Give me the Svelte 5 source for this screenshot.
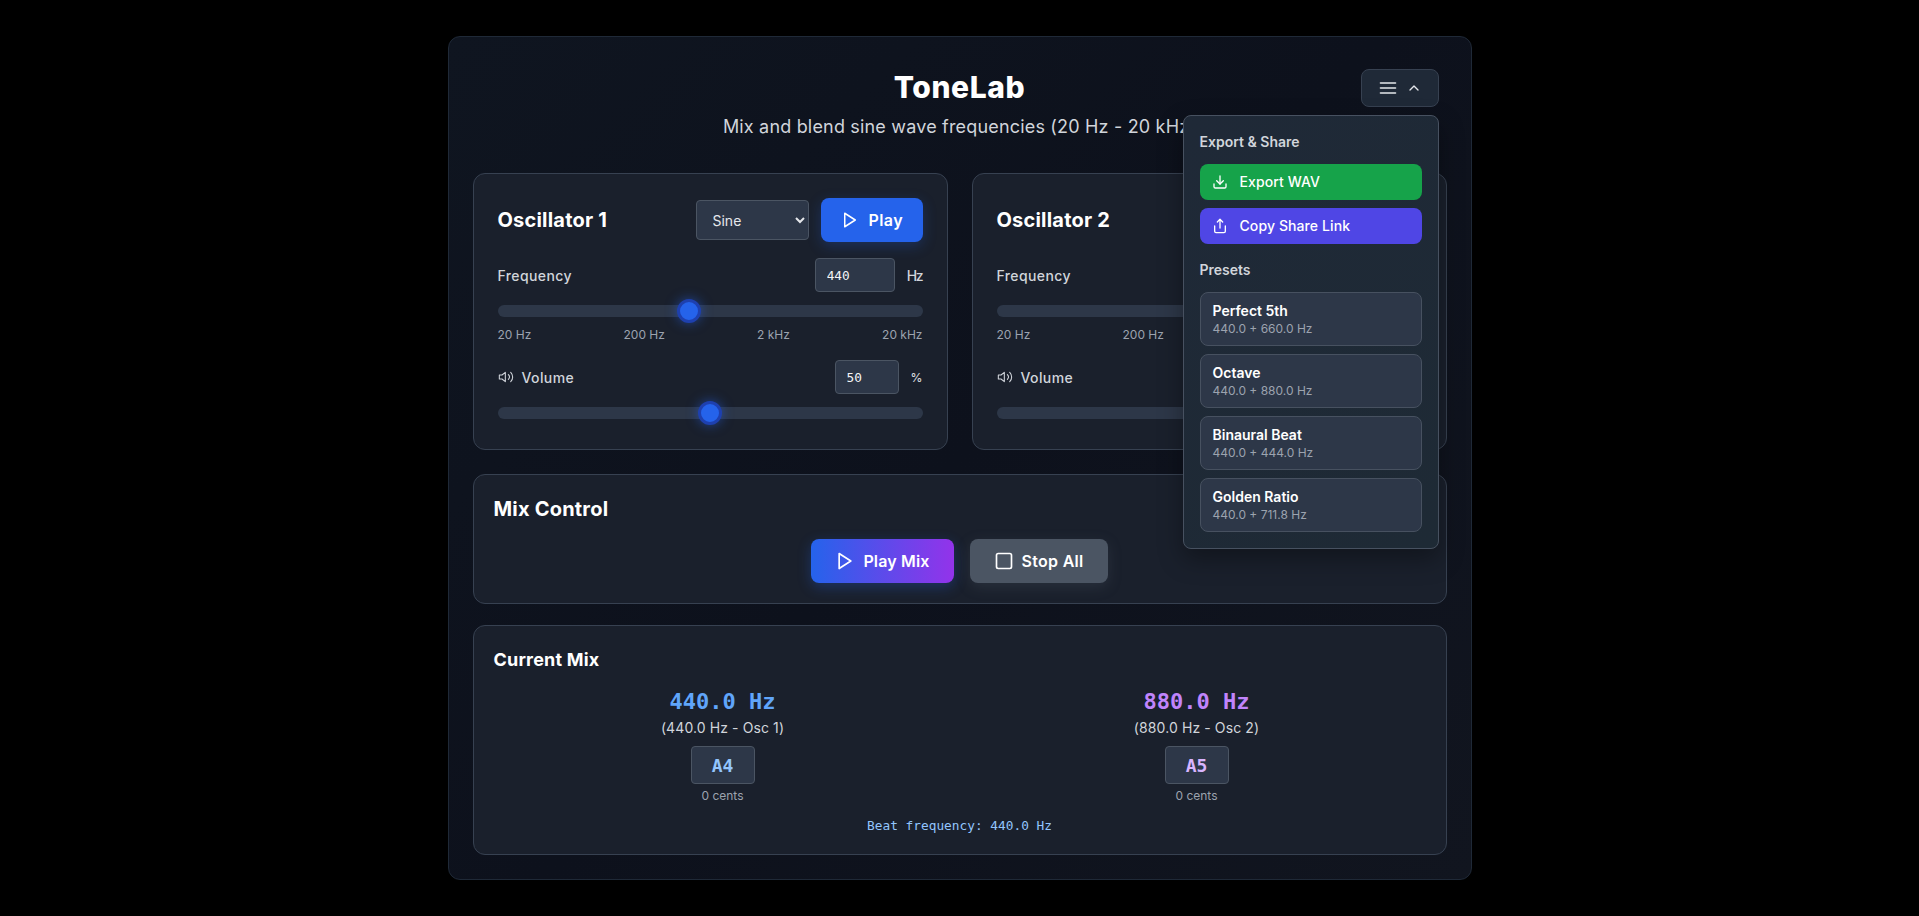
<script lang="ts">
  let oscillators = $state([
    { name: 'Oscillator 1', type: 'Sine', freq: 440, pos: 44.75, volume: 50 },
    { name: 'Oscillator 2', type: 'Sine', freq: 880, pos: 54.8, volume: 50 }
  ]);

  const scaleLabels = ['20 Hz', '200 Hz', '2 kHz', '20 kHz'];

  const presets = [
    { name: 'Perfect 5th', detail: '440.0 + 660.0 Hz' },
    { name: 'Octave', detail: '440.0 + 880.0 Hz' },
    { name: 'Binaural Beat', detail: '440.0 + 444.0 Hz' },
    { name: 'Golden Ratio', detail: '440.0 + 711.8 Hz' }
  ];

  const readouts = [
    { hz: '440.0 Hz', sub: '(440.0 Hz - Osc 1)', note: 'A4', tone: 'blue' },
    { hz: '880.0 Hz', sub: '(880.0 Hz - Osc 2)', note: 'A5', tone: 'purple' }
  ];

  let menuOpen = $state(true);
</script>

{#snippet playIcon(size: number)}
  <svg width={size} height={size} viewBox="0 0 24 24" class="icon"><polygon points="5 3 19 12 5 21 5 3" /></svg>
{/snippet}

<div class="page">
  <main class="shell">
    <header class="header">
      <h1>ToneLab</h1>
      <p>Mix and blend sine wave frequencies (20 Hz - 20 kHz)</p>

      <button class="menu-btn" onclick={() => (menuOpen = !menuOpen)} aria-label="Menu">
        <svg width="20" height="20" viewBox="0 0 24 24" class="icon">
          <line x1="3" y1="6" x2="21" y2="6" /><line x1="3" y1="12" x2="21" y2="12" /><line x1="3" y1="18" x2="21" y2="18" />
        </svg>
        <svg width="16" height="16" viewBox="0 0 24 24" class="icon"><polyline points="18 15 12 9 6 15" /></svg>
      </button>

      {#if menuOpen}
        <div class="dropdown">
          <h3>Export &amp; Share</h3>
          <div class="stack">
            <button class="action green">
              <svg width="16" height="16" viewBox="0 0 24 24" class="icon">
                <path d="M21 15v4a2 2 0 0 1-2 2H5a2 2 0 0 1-2-2v-4" /><polyline points="7 10 12 15 17 10" /><line x1="12" y1="15" x2="12" y2="3" />
              </svg>
              Export WAV
            </button>
            <button class="action indigo">
              <svg width="16" height="16" viewBox="0 0 24 24" class="icon">
                <path d="M4 12v8a2 2 0 0 0 2 2h12a2 2 0 0 0 2-2v-8" /><polyline points="16 6 12 2 8 6" /><line x1="12" y1="2" x2="12" y2="15" />
              </svg>
              Copy Share Link
            </button>
          </div>
          <h3 class="second">Presets</h3>
          <div class="stack">
            {#each presets as preset}
              <button class="preset">
                <span class="preset-name">{preset.name}</span>
                <span class="preset-detail">{preset.detail}</span>
              </button>
            {/each}
          </div>
        </div>
      {/if}
    </header>

    <section class="osc-grid">
      {#each oscillators as osc}
        <div class="card osc">
          <div class="osc-top">
            <h2>{osc.name}</h2>
            <div class="osc-actions">
              <select bind:value={osc.type}>
                <option>Sine</option>
                <option>Square</option>
                <option>Triangle</option>
                <option>Sawtooth</option>
              </select>
              <button class="btn blue play">{@render playIcon(18)} Play</button>
            </div>
          </div>

          <div class="field-row">
            <span class="label">Frequency</span>
            <div class="field-input">
              <input class="num freq" type="number" bind:value={osc.freq} />
              <span class="unit">Hz</span>
            </div>
          </div>
          <input class="slider" type="range" min="0" max="100" step="0.05" bind:value={osc.pos} />
          <div class="scale">
            {#each scaleLabels as tick}<span>{tick}</span>{/each}
          </div>

          <div class="field-row vol">
            <span class="label">
              <svg width="16" height="16" viewBox="0 0 24 24" class="icon thin">
                <polygon points="11 5 6 9 2 9 2 15 6 15 11 19 11 5" /><path d="M15.54 8.46a5 5 0 0 1 0 7.07" /><path d="M19.07 4.93a10 10 0 0 1 0 14.14" />
              </svg>
              Volume
            </span>
            <div class="field-input">
              <input class="num vol-num" type="number" bind:value={osc.volume} />
              <span class="unit pct">%</span>
            </div>
          </div>
          <input class="slider last" type="range" min="0" max="100" bind:value={osc.volume} />
        </div>
      {/each}
    </section>

    <section class="card mix">
      <h2>Mix Control</h2>
      <div class="mix-actions">
        <button class="btn gradient">{@render playIcon(20)} Play Mix</button>
        <button class="btn gray">
          <svg width="20" height="20" viewBox="0 0 24 24" class="icon"><rect x="3" y="3" width="18" height="18" rx="2" /></svg>
          Stop All
        </button>
      </div>
    </section>

    <section class="card current">
      <h3>Current Mix</h3>
      <div class="readouts">
        {#each readouts as r}
          <div class="readout {r.tone}">
            <div class="hz">{r.hz}</div>
            <div class="sub">{r.sub}</div>
            <div class="note">{r.note}</div>
            <div class="cents">0 cents</div>
          </div>
        {/each}
      </div>
      <div class="beat">Beat frequency: 440.0 Hz</div>
    </section>
  </main>
</div>

<style>
  :global(body) {
    margin: 0;
    background: #000;
    font-family: Inter, "Noto Sans", sans-serif;
    color: #fff;
  }

  .page {
    min-height: 916px;
    display: flex;
    align-items: center;
    justify-content: center;
  }

  .shell {
    width: 1024px;
    box-sizing: border-box;
    padding: 24px;
    border: 1px solid #1f2937;
    border-radius: 12px;
    background: linear-gradient(135deg, #0f1520 0%, #0d111c 50%, #11151f 100%);
  }

  .icon {
    fill: none;
    stroke: currentColor;
    stroke-width: 2;
    stroke-linecap: round;
    stroke-linejoin: round;
    flex: none;
  }

  .icon.thin {
    stroke-width: 1.6;
  }

  .header {
    position: relative;
    padding-top: 8px;
    margin-bottom: 32px;
    text-align: center;
  }

  h1 {
    margin: 0 0 8px;
    font-size: 30px;
    line-height: 36px;
    font-weight: 800;
    letter-spacing: 0.6px;
  }

  .header p {
    margin: 0;
    font-size: 18px;
    line-height: 28px;
    color: #d1d5db;
    letter-spacing: 0.01em;
  }

  .menu-btn {
    position: absolute;
    top: 8px;
    right: 8px;
    display: flex;
    align-items: center;
    gap: 8px;
    padding: 8px 16px;
    background: #1f2937;
    border: 1px solid #374151;
    border-radius: 8px;
    color: #e5e7eb;
  }

  .dropdown {
    position: absolute;
    top: 54px;
    right: 8px;
    z-index: 10;
    width: 256px;
    box-sizing: border-box;
    padding: 16px;
    text-align: left;
    background: linear-gradient(135deg, #1f2937, #1e2a35);
    border: 1px solid #475160;
    border-radius: 8px;
    box-shadow: 0 10px 25px rgba(0, 0, 0, 0.35);
  }

  .dropdown h3 {
    margin: 0 0 12px;
    font-size: 14px;
    line-height: 20px;
    font-weight: 600;
    color: #d1d5db;
  }

  .dropdown h3.second {
    margin-top: 16px;
  }

  .stack {
    display: flex;
    flex-direction: column;
    gap: 8px;
  }

  button {
    font-family: inherit;
    cursor: pointer;
  }

  .action {
    display: flex;
    align-items: center;
    gap: 12px;
    height: 36px;
    padding: 0 12px 1px;
    border: 0;
    border-radius: 8px;
    color: #fff;
    font-size: 14px;
    font-weight: 500;
    letter-spacing: 0.1px;
  }

  .action.green {
    background: #16a34a;
  }

  .action.indigo {
    background: #4f46e5;
  }

  .preset {
    display: flex;
    flex-direction: column;
    align-items: flex-start;
    height: 54px;
    box-sizing: border-box;
    padding: 8px 12px;
    background: #2d3748;
    border: 1px solid #475160;
    border-radius: 8px;
  }

  .preset-name {
    font-size: 14px;
    line-height: 20px;
    font-weight: 600;
    color: #fff;
  }

  .preset-detail {
    font-size: 12px;
    line-height: 16px;
    color: #9ca3af;
  }

  .osc-grid {
    display: grid;
    grid-template-columns: 1fr 1fr;
    gap: 24px;
    margin-bottom: 24px;
  }

  .card {
    background: #1a202c;
    border: 1px solid #374151;
    border-radius: 12px;
    box-sizing: border-box;
  }

  .osc {
    padding: 24px;
  }

  .osc-top {
    display: flex;
    align-items: center;
    justify-content: space-between;
    margin-bottom: 16px;
  }

  h2 {
    margin: 0;
    font-size: 20px;
    line-height: 28px;
    font-weight: 700;
    letter-spacing: 0.2px;
  }

  .osc-actions {
    display: flex;
    align-items: center;
    gap: 12px;
  }

  select {
    width: 113px;
    height: 40px;
    padding: 0 12px;
    background: #2d3748;
    border: 1px solid #4b5563;
    border-radius: 4px;
    color: #e5e7eb;
    font-family: inherit;
    font-size: 14px;
  }

  .btn {
    display: flex;
    align-items: center;
    gap: 8px;
    height: 44px;
    padding: 0 24px;
    border: 0;
    border-radius: 8px;
    color: #fff;
    font-size: 16px;
    font-weight: 600;
    letter-spacing: 0.15px;
  }

  .btn.play {
    width: 102px;
    padding: 0 20px;
    gap: 10px;
    box-sizing: border-box;
    letter-spacing: 0.4px;
  }

  .btn.blue {
    background: #2563eb;
    box-shadow: 0 4px 14px rgba(37, 99, 235, 0.25);
  }

  .btn.gradient {
    background: linear-gradient(90deg, #2563eb, #9333ea);
    box-shadow: 0 4px 14px rgba(37, 99, 235, 0.3);
  }

  .btn.gray {
    background: #4b5563;
    box-shadow: 0 4px 14px rgba(75, 85, 99, 0.3);
    letter-spacing: 0.3px;
  }

  .field-row {
    display: flex;
    align-items: center;
    justify-content: space-between;
    margin-bottom: 13px;
  }

  .field-row.vol {
    margin-top: 17px;
  }

  .label {
    display: flex;
    align-items: center;
    gap: 8px;
    font-size: 14px;
    font-weight: 500;
    color: #d1d5db;
    letter-spacing: 0.4px;
  }

  .field-input {
    display: flex;
    align-items: center;
    gap: 12px;
  }

  .unit {
    font-size: 14px;
    font-weight: 500;
    color: #d1d5db;
    letter-spacing: -1.2px;
  }

  .unit.pct {
    font-size: 12px;
    letter-spacing: 0;
  }

  .num {
    height: 34px;
    box-sizing: border-box;
    padding: 0 11px;
    background: #2d3748;
    border: 1px solid #4b5563;
    border-radius: 4px;
    color: #f3f4f6;
    font-family: "DejaVu Sans Mono", monospace;
    font-size: 12.8px;
    appearance: textfield;
  }

  .num.freq {
    width: 80px;
  }

  .num.vol-num {
    width: 64px;
  }

  .slider {
    display: block;
    width: 100%;
    height: 12px;
    margin: 0;
    appearance: none;
    background: #2d3748;
    border-radius: 6px;
    outline: none;
  }

  .slider.last {
    margin-bottom: 6px;
  }

  .slider::-webkit-slider-thumb {
    appearance: none;
    width: 24px;
    height: 24px;
    box-sizing: border-box;
    border-radius: 50%;
    background: #2563eb;
    border: 3px solid #1e40af;
    box-shadow: 0 0 12px rgba(37, 99, 235, 0.55);
  }

  .scale {
    display: flex;
    justify-content: space-between;
    margin-top: 10px;
    font-size: 12px;
    line-height: 16px;
    color: #9ca3af;
  }

  .mix {
    padding: 20px;
    margin-bottom: 21px;
  }

  .mix-actions {
    display: flex;
    justify-content: center;
    gap: 16px;
    margin-top: 16px;
  }

  .current {
    padding: 20px;
  }

  .current h3 {
    margin: 0 0 12px;
    font-size: 18px;
    line-height: 28px;
    font-weight: 700;
    letter-spacing: 0.2px;
  }

  .readouts {
    display: grid;
    grid-template-columns: 1fr 1fr;
    gap: 16px;
  }

  .readout {
    display: flex;
    flex-direction: column;
    align-items: center;
  }

  .hz {
    font-family: "DejaVu Sans Mono", monospace;
    font-size: 22px;
    line-height: 32px;
    font-weight: 700;
  }

  .sub {
    font-size: 14px;
    line-height: 20px;
    color: #d1d5db;
    letter-spacing: 0.1px;
  }

  .note {
    width: 64px;
    height: 38px;
    box-sizing: border-box;
    margin-top: 8px;
    display: flex;
    align-items: center;
    justify-content: center;
    background: #2d3748;
    border: 1px solid #4b5563;
    border-radius: 4px;
    font-family: "DejaVu Sans Mono", monospace;
    font-size: 18px;
    font-weight: 700;
  }

  .cents {
    margin-top: 4px;
    font-size: 12px;
    line-height: 16px;
    color: #9ca3af;
  }

  .blue .hz {
    color: #60a5fa;
  }

  .blue .note {
    color: #93c5fd;
  }

  .purple .hz {
    color: #c084fc;
  }

  .purple .note {
    color: #d8b4fe;
  }

  .beat {
    margin-top: 14px;
    text-align: center;
    font-family: "DejaVu Sans Mono", monospace;
    font-size: 12.8px;
    line-height: 16px;
    color: #93c5fd;
  }
</style>
